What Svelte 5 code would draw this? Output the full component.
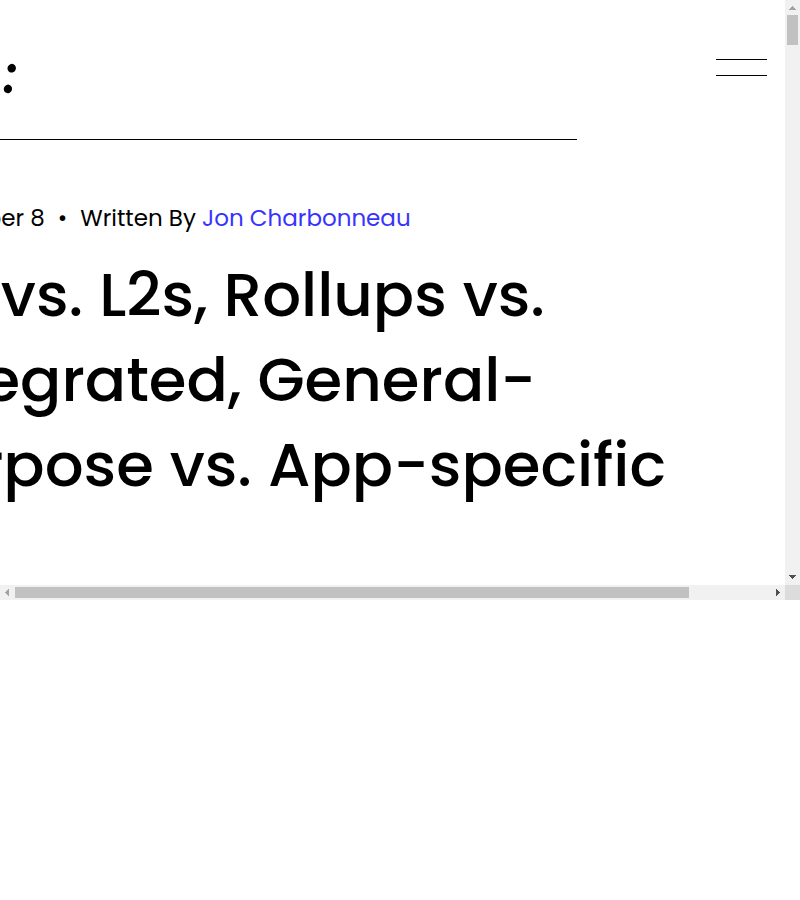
<script>
  const titleLines = ['L1s vs. L2s, Rollups vs.', 'Integrated, General-', 'Purpose vs. App-specific'];
  const scroll = { width: 89.27, height: 5.41 };
</script>

<div class="frame">
  <main class="page">
    <header>
      <a class="logo" href="#home" aria-label="Home">
        <svg width="20" height="40" viewBox="0 0 20 40" aria-hidden="true">
          <ellipse cx="11.7" cy="13.2" rx="4.2" ry="4.4" transform="rotate(25 11.7 13.2)" />
          <ellipse cx="7.9" cy="33.9" rx="4.1" ry="4.3" transform="rotate(25 7.9 33.9)" />
        </svg>
      </a>
      <button class="menu" type="button" aria-label="Open menu">
        <span></span>
        <span></span>
      </button>
    </header>

    <article>
      <p class="meta">
        <span>November 8</span>
        <span>•</span>
        <span>Written By <a href="#author">Jon Charbonneau</a></span>
      </p>
      <h1>
        {#each titleLines as line}
          <span>{line}</span>
        {/each}
      </h1>
    </article>
  </main>

  <div class="bar vertical">
    <svg width="15" height="15" viewBox="0 0 15 15" shape-rendering="crispEdges" aria-hidden="true">
      <path fill="#a3a3a3" d="M7 6h1v1h1v1h1v1h1v1H4V9h1V8h1V7h1z" />
    </svg>
    <div class="track"><div class="thumb" style="height: {scroll.height}%"></div></div>
    <svg width="15" height="15" viewBox="0 0 15 15" shape-rendering="crispEdges" aria-hidden="true">
      <path fill="#505050" d="M4 5h7v1h-1v1H9v1H8v1H7V8H6V7H5V6H4z" />
    </svg>
  </div>

  <div class="bar horizontal">
    <svg width="15" height="15" viewBox="0 0 15 15" shape-rendering="crispEdges" aria-hidden="true">
      <path fill="#a3a3a3" d="M9 4v7H8v-1H7V9H6V8H5V7h1V6h1V5h1V4z" />
    </svg>
    <div class="track"><div class="thumb" style="width: {scroll.width}%"></div></div>
    <svg width="15" height="15" viewBox="0 0 15 15" shape-rendering="crispEdges" aria-hidden="true">
      <path fill="#505050" d="M6 4v7h1v-1h1V9h1V8h1V7H9V6H8V5H7V4z" />
    </svg>
  </div>
  <div class="corner"></div>
</div>

<style>
  :global(body) {
    background: #fff;
  }

  .frame {
    display: grid;
    grid-template-columns: minmax(0, 1fr) 15px;
    grid-template-rows: auto 15px;
    font-family: Poppins, Inter, "Open Sans", sans-serif;
    font-variant-ligatures: none;
    color: #000;
  }

  .page {
    overflow: hidden;
    padding-bottom: 78px;
  }

  header {
    display: grid;
    grid-template-columns: minmax(0, 577fr) 208fr;
  }

  .logo {
    display: block;
    padding: 55px 0 44px;
    border-bottom: 1px solid #000;
  }

  .logo svg {
    display: block;
    fill: #000;
  }

  .menu {
    justify-self: end;
    align-self: start;
    display: flex;
    flex-direction: column;
    gap: 15px;
    width: 51px;
    margin: 59px 18px 0 0;
    padding: 0;
    border: 0;
    background: none;
    cursor: pointer;
  }

  .menu span {
    height: 1px;
    background: #000;
  }

  article {
    margin-left: -96px;
  }

  .meta {
    display: flex;
    gap: 13px;
    margin: 60px 0 0;
    font-size: 23px;
    line-height: 36px;
    white-space: nowrap;
  }

  .meta a {
    color: #3733ff;
    text-decoration: none;
  }

  h1 {
    margin: 16px 0 0;
    font-size: 61px;
    font-weight: 500;
    line-height: 85px;
    white-space: nowrap;
  }

  h1 span {
    display: block;
  }

  .bar {
    display: flex;
    background: #f1f1f1;
  }

  .bar svg {
    display: block;
    flex: none;
  }

  .track {
    flex: 1;
  }

  .thumb {
    background: #c1c1c1;
  }

  .vertical {
    flex-direction: column;
  }

  .vertical .thumb {
    margin: 0 2px;
  }

  .horizontal .track {
    padding: 2px 0;
  }

  .horizontal .thumb {
    height: 100%;
  }

  .corner {
    background: #dcdcdc;
  }
</style>
